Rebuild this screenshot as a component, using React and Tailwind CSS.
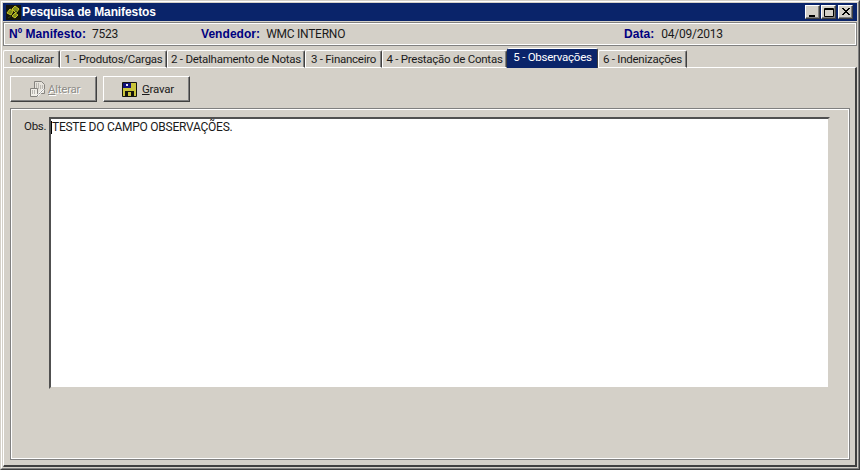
// Pesquisa de Manifestos - tela classica do Windows
const raised = 'border border-t-white border-l-white border-r-[#404040] border-b-[#404040] shadow-[inset_-1px_-1px_0_#808080]';

const tabs = [
  { label: 'Localizar', width: 'w-[57px]' },
  { label: '1 - Produtos/Cargas', width: 'w-[107px]' },
  { label: '2 - Detalhamento de Notas', width: 'w-[138px]' },
  { label: '3 - Financeiro', width: 'w-[77px]' },
  { label: '4 - Prestação de Contas', width: 'w-[125px]' },
  { label: '5 - Observações', width: 'w-[91px]', active: true },
  { label: '6 - Indenizações', width: 'w-[89px]' },
];

function AppIcon() {
  return (
    <svg width="15" height="15" viewBox="0 0 15 15" className="shrink-0">
      <rect width="15" height="15" fill="#14140c" />
      <path d="M1 8l3-4 3 2-2 4zM6 4l3-3 4 3-3 4zM6 11l3-3 3 2-3 3z" fill="#7f8a1c" stroke="#c8c424" strokeWidth="1" />
      <path d="M2 13l3-2M9 6l2 1" stroke="#36480c" strokeWidth="1" />
    </svg>
  );
}

function EditIcon() {
  return (
    <svg width="17" height="17" viewBox="0 0 17 17" className="shrink-0">
      <path d="M5.5 0.5h7l3 3v9h-10z" fill="#e6e3dc" stroke="#85837e" />
      <path d="M7 3h4M7 5h7M7 7h7" stroke="#8f8d88" strokeDasharray="1 1" />
      <path d="M1.5 7.5h7v8h-7z" fill="#f0eee8" stroke="#85837e" />
      <path d="M3 10h4M3 12h4" stroke="#85837e" strokeDasharray="1 1" />
      <path d="M8 15l7-7" stroke="#ffffff" strokeWidth="2" />
      <path d="M8 15l7-7" stroke="#85837e" strokeDasharray="2 1" />
    </svg>
  );
}

function SaveIcon() {
  return (
    <svg width="15" height="15" viewBox="0 0 15 15" className="shrink-0">
      <path d="M0.5 0.5h14v14h-14z" fill="#c9c43a" stroke="#14140c" />
      <path d="M1 1h8v5H1z" fill="#12127a" />
      <path d="M4 2h2v2H4z" fill="#e8e8f4" />
      <path d="M3 9h9v5H3z" fill="#14140c" />
      <path d="M6 10h3v4H6z" fill="#c9c43a" />
    </svg>
  );
}

function WinButton({ children, className = '' }) {
  return (
    <div className={`w-[15px] h-[14px] bg-[#d4d0c8] flex items-center justify-center ${raised} ${className}`}>
      <svg width="10" height="10" viewBox="0 0 10 10">{children}</svg>
    </div>
  );
}

function Field({ label, value, width, gap }) {
  return (
    <div className={`flex items-center ${width} ${gap}`}>
      <span className="font-bold text-[#000080] tracking-[0.05px] font-['Liberation_Sans',Arial,sans-serif] text-[12px]">{label}</span>
      <span className="text-[#1a1a1a] text-[12px] tracking-[-0.25px]">{value}</span>
    </div>
  );
}

function ToolButton({ icon, first, rest, disabled, gap }) {
  return (
    <button className={`h-[26px] w-[87px] pl-[18px] pt-[1px] flex items-center ${gap} bg-[#d4d0c8] ${raised} ${disabled ? "text-[#8f8d88] [text-shadow:1px_1px_0_#fff]" : 'text-[#1a1a1a]'}`}>
      {icon}
      <span><span className="underline">{first}</span>{rest}</span>
    </button>
  );
}

export default function App() {
  return (
    <div className="w-[860px] h-[470px] bg-[#d4d0c8] border border-t-[#d4d0c8] border-l-[#d4d0c8] border-r-[#404040] border-b-[#404040] font-['Roboto','Liberation_Sans',Arial,sans-serif] text-[11.5px] tracking-[-0.25px] leading-none overflow-hidden">
      <div className="h-full border border-t-white border-l-white border-r-[#808080] border-b-[#808080] p-[1px] flex flex-col">
        <div className="h-[18px] bg-[#0a246a] flex items-center pl-[3px] pr-[4px] shrink-0">
          <AppIcon />
          <span className="ml-[1px] text-white font-bold tracking-[-0.1px] font-['Liberation_Sans',Arial,sans-serif] text-[12px]">Pesquisa de Manifestos</span>
          <div className="ml-auto flex items-center">
            <WinButton><path d="M1 8h6v2H1z" fill="#000" /></WinButton>
            <WinButton className="ml-[1px]"><path d="M0.5 1.5h9v8h-9zM0.5 2.5h9" fill="none" stroke="#000" /></WinButton>
            <WinButton className="ml-[2px]"><path d="M1 1l7 7M2 1l7 7M8 1L1 8M9 1L2 8" stroke="#000" /></WinButton>
          </div>
        </div>

        <div className="h-[24px] mt-[1px] shrink-0 border border-[#808080]">
          <div className="h-full border border-white flex items-center pl-[4px]">
            <Field label="Nº Manifesto:" value="7523" width="w-[192px]" gap="gap-[6px]" />
            <Field label="Vendedor:" value="WMC INTERNO" width="w-[423px]" gap="gap-[6px]" />
            <Field label="Data:" value="04/09/2013" width="" gap="gap-[7px]" />
          </div>
        </div>

        <div className="h-[21px] mt-[1px] flex items-end shrink-0 relative z-10">
          {tabs.map((tab) => (
            <div
              key={tab.label}
              className={`${tab.width} shrink-0 flex items-center justify-center whitespace-nowrap border-l border-t border-r rounded-t-[2px] border-t-white border-r-[#404040] ${
                tab.active
                  ? 'h-[20px] bg-[#0a246a] text-white border-l-[#0a246a] pb-[2px]'
                  : 'h-[18px] pt-[1px] bg-[#d4d0c8] text-[#1a1a1a] border-l-white border-b border-b-white shadow-[inset_-1px_0_0_#808080]'
              }`}
            >
              {tab.label}
            </div>
          ))}
        </div>

        <div className="flex-1 -mt-[1px] flex flex-col border-l border-t border-t-white border-l-white border-r-2 border-b-2 border-r-[#404040] border-b-[#404040] pl-[6px] pr-[5px]">
          <div className="flex gap-[6px] mt-[8px] shrink-0">
            <ToolButton icon={<EditIcon />} first="A" rest="lterar" disabled gap="gap-[2px]" />
            <ToolButton icon={<SaveIcon />} first="G" rest="ravar" gap="gap-[5px]" />
          </div>
          <div className="mt-[6px] h-[352px] shrink-0 border border-[#808080]">
            <div className="h-full border border-white flex items-start pt-[7px] pl-[12px] pr-[18px]">
              <span className="w-[25px] pt-[4px] text-[#1a1a1a] shrink-0">Obs.</span>
              <div className="h-[272px] flex-1 bg-white border-2 border-t-[#505050] border-l-[#505050] border-r-[#d4d0c8] border-b-[#d4d0c8] pt-[2px] text-[12px] tracking-[-0.25px] text-[#1a1a1a] flex items-start">
                <span className="w-px h-[13px] bg-black" />
                TESTE DO CAMPO OBSERVAÇÕES.
              </div>
            </div>
          </div>
        </div>
      </div>
    </div>
  );
}
